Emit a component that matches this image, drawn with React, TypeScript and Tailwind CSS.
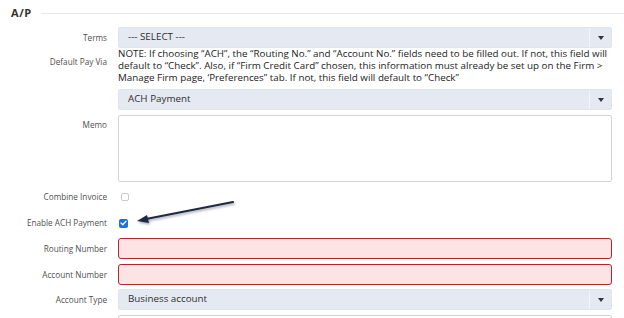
import React from 'react';

const Label: React.FC<{ text: string; className?: string }> = ({ text, className = '' }) => (
  <div className={`w-[107px] shrink-0 text-right text-[8.2px] leading-[11.5px] text-[#4f4f4f] ${className}`}>
    {text}
  </div>
);

const Select: React.FC<{ value: string }> = ({ value }) => (
  <div className="flex h-[21px] w-[494px] rounded-[2px] border border-[#dfe5ee] bg-[#e5eaf2]">
    <div className="flex flex-1 items-center pl-[9px] text-[9.8px] text-[#2e2e2e]">{value}</div>
    <div className="flex w-[22px] items-center justify-center border-l border-[#f3f5f9]">
      <svg width="6" height="4" viewBox="0 0 6 4">
        <path d="M0 0 L6 0 L3 4 Z" fill="#333" />
      </svg>
    </div>
  </div>
);

const ErrorInput: React.FC = () => (
  <div className="h-[21px] w-[494px] rounded-[3px] border-[1.5px] border-[#b0262c] bg-[#fde3e3]" />
);

export default function App() {
  return (
    <div className="relative h-[318px] w-[624px] overflow-hidden bg-white font-['Open_Sans',sans-serif]">
      <div className="flex h-[27px] items-center pl-[11px]">
        <span className="text-[11px] font-bold tracking-[0.6px] text-[#333]">A/P</span>
        <div className="ml-[9px] h-px flex-1 bg-[#e6e9ee]" />
      </div>

      <div className="flex">
        <Label text="Terms" className="self-center" />
        <div className="ml-[11px]">
          <Select value="--- SELECT ---" />
        </div>
      </div>

      <div className="flex">
        <Label text="Default Pay Via" className="pt-[8px]" />
        <div className="ml-[11px]">
          <div className="whitespace-nowrap text-[9.8px] leading-[12px] text-[#222]">
            NOTE: If choosing “ACH”, the “Routing No.” and “Account No.” fields need to be filled out. If not, this field will
            <br />
            default to “Check”. Also, if “Firm Credit Card” chosen, this information must already be set up on the Firm &gt;
            <br />
            Manage Firm page, ‘Preferences” tab. If not, this field will default to “Check”
          </div>
          <div className="mt-[5px]">
            <Select value="ACH Payment" />
          </div>
        </div>
      </div>

      <div className="mt-[5px] flex">
        <Label text="Memo" className="pt-[4px]" />
        <div className="ml-[11px] h-[67px] w-[494px] rounded-[2px] border border-[#d4d4d4] bg-white" />
      </div>

      <div className="mt-[5px] flex h-[20px] items-center">
        <Label text="Combine Invoice" />
        <div className="ml-[14px] h-[8px] w-[8px] rounded-[2px] border border-[#c9c9c9] bg-white" />
      </div>

      <div className="mt-[6px] flex h-[20px] items-center">
        <Label text="Enable ACH Payment" />
        <div className="ml-[12px] flex h-[9px] w-[9px] items-center justify-center rounded-[2px] bg-[#1b6fe0]">
          <svg width="7" height="6" viewBox="0 0 7 6">
            <path d="M1 3 L2.8 4.8 L6 1.2" stroke="white" strokeWidth="1.3" fill="none" strokeLinecap="round" strokeLinejoin="round" />
          </svg>
        </div>
      </div>

      <div className="mt-[5px] flex items-center">
        <Label text="Routing Number" />
        <div className="ml-[11px]">
          <ErrorInput />
        </div>
      </div>

      <div className="mt-[5px] flex items-center">
        <Label text="Account Number" />
        <div className="ml-[11px]">
          <ErrorInput />
        </div>
      </div>

      <div className="mt-[4px] flex items-center">
        <Label text="Account Type" />
        <div className="ml-[11px]">
          <Select value="Business account" />
        </div>
      </div>

      <div className="mt-[5px] flex">
        <div className="w-[107px] shrink-0" />
        <div className="ml-[11px] h-[21px] w-[494px] rounded-[2px] border border-[#d4d4d4] bg-white" />
      </div>

      {/* annotation arrow */}
      <svg className="pointer-events-none absolute left-0 top-0" width="624" height="318">
        <defs>
          <filter id="sh" x="-20%" y="-50%" width="140%" height="200%">
            <feDropShadow dx="1" dy="1.5" stdDeviation="1" floodColor="#000" floodOpacity="0.35" />
          </filter>
        </defs>
        <g filter="url(#sh)">
          <line x1="233" y1="202" x2="146" y2="219" stroke="#1e2a45" strokeWidth="2.2" strokeLinecap="round" />
          <path d="M137 221 L147 215 L149 223 Z" fill="#1e2a45" />
        </g>
      </svg>
    </div>
  );
}
